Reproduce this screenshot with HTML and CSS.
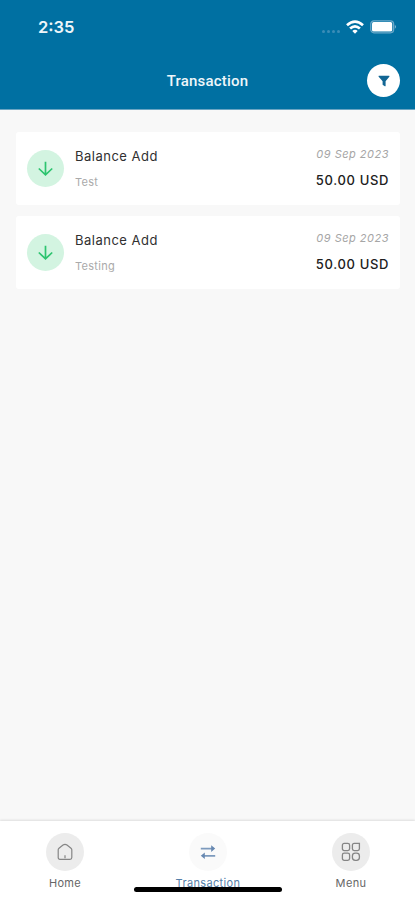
FILE: index.html
```html
<!DOCTYPE html>
<html lang="en">
<head>
<meta charset="utf-8">
<title>Transaction</title>
<link rel="stylesheet" href="styles.css">
</head>
<body>
<div class="app">
  <header class="header">
    <div class="status">
      <span class="time">2:35</span>
      <div class="indicators">
        <span class="signal"><i></i><i></i><i></i><i></i></span>
        <svg class="wifi" width="18" height="14" viewBox="0 0 18 14" fill="none" stroke="#fff" stroke-width="2.7">
          <path d="M1 5.2Q9-2 17 5.2"/>
          <path d="M4.1 8.6Q9 4.2 13.9 8.6"/>
          <path d="M6.3 11Q9 8.7 11.7 11L9 13.8Z" fill="#fff" stroke="none"/>
        </svg>
        <svg class="battery" width="27" height="14" viewBox="0 0 27 14">
          <rect x=".8" y=".8" width="22.8" height="12" rx="3.2" fill="none" stroke="#6ba9ca" stroke-width="1.3"/>
          <rect x="2" y="2" width="20.2" height="9.6" rx="1.7" fill="#fff"/>
          <path d="M24.8 4.7q2.4 2.1 0 4.2z" fill="#82b7d2"/>
        </svg>
      </div>
    </div>
    <div class="titlebar">
      <h1>Transaction</h1>
      <button class="filter" aria-label="Filter">
        <svg width="12" height="12" viewBox="0 0 12 12"><path d="M.8.7h10.4q.6.5.1 1.1L7.6 6.2v4.7q-.2.7-.8.3L4.6 9.8V6.2L.7 1.8Q.2 1.2.8.7z" fill="#126694"/></svg>
      </button>
    </div>
  </header>
  <main class="list">
    <article class="card">
      <span class="arrow"><svg width="17" height="17" viewBox="0 0 17 17"><path d="M8.5 1.8v13M1.8 8.5l6.7 6.3 6.7-6.3"/></svg></span>
      <div class="info"><span class="name">Balance Add</span><span class="note">Test</span></div>
      <div class="amounts"><span class="date">09 Sep 2023</span><span class="amount">50.00 USD</span></div>
    </article>
    <article class="card">
      <span class="arrow"><svg width="17" height="17" viewBox="0 0 17 17"><path d="M8.5 1.8v13M1.8 8.5l6.7 6.3 6.7-6.3"/></svg></span>
      <div class="info"><span class="name">Balance Add</span><span class="note">Testing</span></div>
      <div class="amounts"><span class="date">09 Sep 2023</span><span class="amount">50.00 USD</span></div>
    </article>
  </main>
  <nav class="tabs">
    <a class="tab">
      <span class="bubble"><svg width="18" height="18" viewBox="0 0 18 18" fill="none" stroke="#858585" stroke-width="1.2"><path d="M2.2 6.8Q2.2 5.9 3 5.2L7 2.1Q9 .7 11 2.1L15 5.2Q15.8 5.9 15.8 6.8V14.5q0 1.8-1.8 1.8H4q-1.8 0-1.8-1.8z"/><path d="M9 12.2v3"/></svg></span>
      <span class="label">Home</span>
    </a>
    <a class="tab active">
      <span class="bubble"><svg width="16" height="16" viewBox="0 0 16 16"><path d="M.8 4.6H12M15.2 11.8H4" stroke="#7d9abd" stroke-width="1.7"/><path d="M11.2 1.3l4 3.3-4 3.3zM4.8 8.5l-4 3.3 4 3.3z" fill="#6788b1"/></svg></span>
      <span class="label">Transaction</span>
    </a>
    <a class="tab">
      <span class="bubble"><svg width="20" height="20" viewBox="0 0 20 20" fill="none" stroke="#858585" stroke-width="1.3"><rect x="1.4" y="1.4" width="7.2" height="7.2" rx="1.8"/><path d="M13.2 1.4h5.2v5.4q0 1.8-1.8 1.8h-3.4q-1.8 0-1.8-1.8V3.2q0-1.8 1.8-1.8z"/><rect x="1.4" y="11.2" width="7.2" height="7.2" rx="1.8"/><rect x="11.4" y="11.2" width="7" height="7.2" rx="2.8"/></svg></span>
      <span class="label">Menu</span>
    </a>
    <span class="home-indicator"></span>
  </nav>
</div>
</body>
</html>
```
FILE: styles.css
```css
* { box-sizing: border-box; }
body { margin: 0; font-family: Inter, Roboto, sans-serif; background: #f8f8f8; }
.app { width: 415px; height: 900px; display: flex; flex-direction: column; overflow: hidden; }
.header { height: 110px; flex: none; background: #0070a2; border-bottom: 1px solid #6aa5c3; color: #eef6fa; }
.status { height: 54px; padding: 0 18px 0 38px; display: flex; justify-content: space-between; align-items: center; }
.time { font: 600 16.5px/20px Inter, sans-serif; }
.indicators { display: flex; align-items: center; }
.signal { display: flex; gap: 2px; padding-top: 8px; margin-right: 6px; }
.signal i { width: 3px; height: 3px; border-radius: 50%; background: #3b8db7; }
.battery { margin-left: 6px; }
.titlebar { height: 53px; padding: 0 15px; display: grid; grid-template-columns: 33px 1fr 33px; align-items: center; }
h1 { grid-column: 2; margin: 0; text-align: center; font-family: Roboto, sans-serif; font-size: 15px; font-weight: 500; line-height: 20px; letter-spacing: .2px; }
.filter { width: 33px; height: 33px; padding: 0; border: 0; border-radius: 50%; background: #fff; display: flex; align-items: center; justify-content: center; }
.list { flex: 1; padding: 22px 15px 0 16px; display: flex; flex-direction: column; gap: 11px; }
.card { height: 73px; padding: 0 11px; display: flex; align-items: center; border-radius: 3px; background: #fff; }
.arrow { width: 37px; height: 37px; border-radius: 50%; background: #d3f4e1; display: flex; align-items: center; justify-content: center; }
.arrow path { fill: none; stroke: #2dc46f; stroke-width: 1.7; }
.info, .amounts { display: flex; flex-direction: column; white-space: nowrap; }
.info { margin-left: 11px; gap: 9px; }
.name { font-size: 13px; line-height: 18px; letter-spacing: .5px; color: #303030; }
.note { font-size: 11px; line-height: 16px; letter-spacing: .3px; color: #aaa; }
.amounts { margin-left: auto; padding-bottom: 2px; align-items: flex-end; gap: 9px; }
.date { font-size: 11px; line-height: 16px; font-style: italic; letter-spacing: .5px; color: #a6a6a6; }
.amount { font-size: 13px; line-height: 18px; font-weight: 500; letter-spacing: .65px; color: #202020; }
.tabs { position: relative; height: 79px; flex: none; padding: 12px 29px 0 30px; display: flex; justify-content: space-between; background: #fff; box-shadow: 0 -1px 2px #ddd; }
.tab { width: 70px; display: flex; flex-direction: column; align-items: center; }
.bubble { width: 38px; height: 38px; border-radius: 50%; background: #ececec; display: flex; align-items: center; justify-content: center; }
.active .bubble { background: #fafafa; }
.label { margin-top: 4px; font-size: 11px; line-height: 16px; letter-spacing: .35px; color: #666; }
.active .label { color: #557fa9; }
.home-indicator { position: absolute; left: 134px; top: 66px; width: 148px; height: 5px; border-radius: 3px; background: #000; }
```
